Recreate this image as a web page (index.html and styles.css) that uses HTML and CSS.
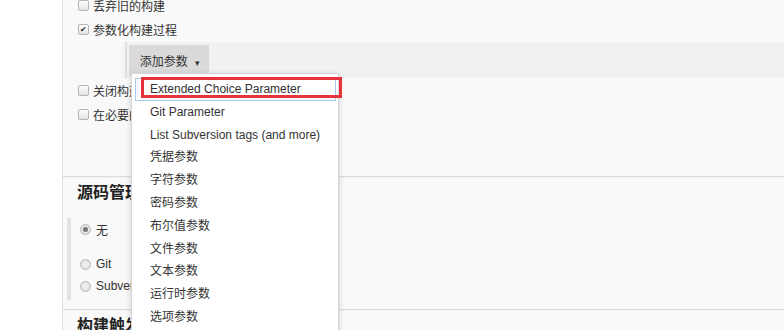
FILE: index.html
```html
<!DOCTYPE html>
<html lang="zh-CN">
<head>
    <meta charset="UTF-8">
    <title>参数化构建过程</title>
    <link rel="stylesheet" href="styles.css">
</head>
<body>
<div class="page">
    <div class="side"></div>

    <div class="main">
        <!-- general options -->
        <div class="options">
            <div class="opt"><span class="check"></span>丢弃旧的构建</div>
            <div class="opt"><span class="check on">&#10004;</span>参数化构建过程</div>
        </div>

        <div class="param-band">
            <div class="band-inner">
                <button class="add-btn">添加参数 <span class="caret">&#9662;</span></button>
            </div>
        </div>

        <!-- these sit under the open menu -->
        <div class="options clipped">
            <div class="opt"><span class="check"></span>关闭构建</div>
            <div class="opt"><span class="check"></span>在必要的时候并发构建</div>
        </div>

        <hr class="divider first">

        <h2 class="section-title">源码管理</h2>
        <div class="radio-group">
            <div class="radio-row"><span class="radio on"></span>无</div>
            <div class="radio-gap"></div>
            <div class="radio-row"><span class="radio"></span>Git</div>
            <div class="radio-row"><span class="radio"></span>Subversion</div>
        </div>

        <hr class="divider">

        <h2 class="section-title">构建触发器</h2>
    </div>

    <!-- add parameter dropdown -->
    <ul class="menu">
        <li class="focused">Extended Choice Parameter</li>
        <li>Git Parameter</li>
        <li>List Subversion tags (and more)</li>
        <li>凭据参数</li>
        <li>字符参数</li>
        <li>密码参数</li>
        <li>布尔值参数</li>
        <li>文件参数</li>
        <li>文本参数</li>
        <li>运行时参数</li>
        <li>选项参数</li>
    </ul>
    <div class="mark"></div>
</div>
</body>
</html>
```

FILE: styles.css
```css
/* base */
body {
    margin: 0;
    padding: 0;
    background: #ffffff;
    font-family: "Liberation Sans", Arial, "Noto Sans CJK SC", sans-serif;
    font-size: 12px;
    color: #333;
    overflow: hidden;
}

.page {
    display: flex;
    position: relative;
    height: 330px;
    overflow: hidden;
}

.side {
    flex: 0 0 62px;
    background: #ffffff;
    border-right: 1px solid #e2e2e2;
}

.main {
    flex: 1;
    background: #f9f9f9;
}

/* checkbox rows */
.options {
    padding-left: 15px;
}

.options:first-child {
    margin-top: -7px;
}

.options.clipped {
    width: 53px;
    overflow: hidden;
    white-space: nowrap;
}

.opt {
    display: flex;
    align-items: center;
    height: 24px;
}

.check {
    flex: 0 0 auto;
    width: 9px;
    height: 9px;
    border: 1px solid #b5b5b5;
    border-radius: 2px;
    background: linear-gradient(#fdfdfd, #e4e4e4);
    margin-right: 4px;
    font-size: 8px;
    line-height: 9px;
    text-align: center;
    color: #333;
}

/* add parameter band */
.param-band {
    margin: 1px 0 0 59px;
    height: 36px;
    background: #f1f1f1;
    border-left: 3px solid #f4f4f4;
}

.band-inner {
    height: 100%;
    border-left: 2px solid #dedede;
    padding: 3px 0 0 2px;
    box-sizing: border-box;
}

.add-btn {
    height: 31px;
    width: 80px;
    border: none;
    background: #dadada;
    color: #333;
    font-family: "Liberation Sans", Arial, "Noto Sans CJK SC", sans-serif;
    font-size: 12px;
    padding: 0 0 0 2px;
}

.caret {
    font-size: 9px;
    margin-left: 4px;
}

/* sections */
.divider {
    border: none;
    border-top: 1px solid #dcdcdc;
    border-bottom: 1px solid #f2f2f2;
    margin: 0;
}

.divider.first {
    margin-top: 50px;
}

.section-title {
    margin: 0;
    height: 30px;
    line-height: 30px;
    padding-left: 14px;
    font-size: 16px;
    font-weight: bold;
    color: #222;
}

.radio-group {
    margin: 10px 0 9px 4px;
    padding: 0 0 3px 9px;
    border-left: 4px solid #e3e3e3;
    height: 79px;
}

.radio-row {
    display: flex;
    align-items: center;
    height: 22px;
}

.radio-gap {
    height: 13px;
}

.radio {
    width: 9px;
    height: 9px;
    border: 1px solid #b8b8b8;
    border-radius: 50%;
    background: radial-gradient(#f4f4f4, #d8d8d8);
    margin-right: 5px;
    position: relative;
}

.radio.on::after {
    content: "";
    position: absolute;
    left: 2px;
    top: 2px;
    width: 5px;
    height: 5px;
    border-radius: 50%;
    background: #777;
}

/* dropdown menu over the page */
.menu {
    position: absolute;
    left: 131px;
    top: 73px;
    width: 206px;
    height: 270px;
    margin: 0;
    padding: 4px 0 0 0;
    list-style: none;
    background: #ffffff;
    border: 1px solid #d6d6d6;
    box-shadow: 0 2px 6px rgba(0, 0, 0, 0.18);
}

.menu li {
    height: 22.8px;
    line-height: 22.8px;
    padding-left: 18px;
    color: #333;
    white-space: nowrap;
}

.menu li.focused {
    outline: 1px solid #a9c6ec;
    outline-offset: -1px;
    margin: 0 2px 0 3px;
    padding-left: 15px;
}

/* red annotation box */
.mark {
    position: absolute;
    left: 141px;
    top: 77px;
    width: 195px;
    height: 15px;
    border: 3px solid #e5323b;
}
```
